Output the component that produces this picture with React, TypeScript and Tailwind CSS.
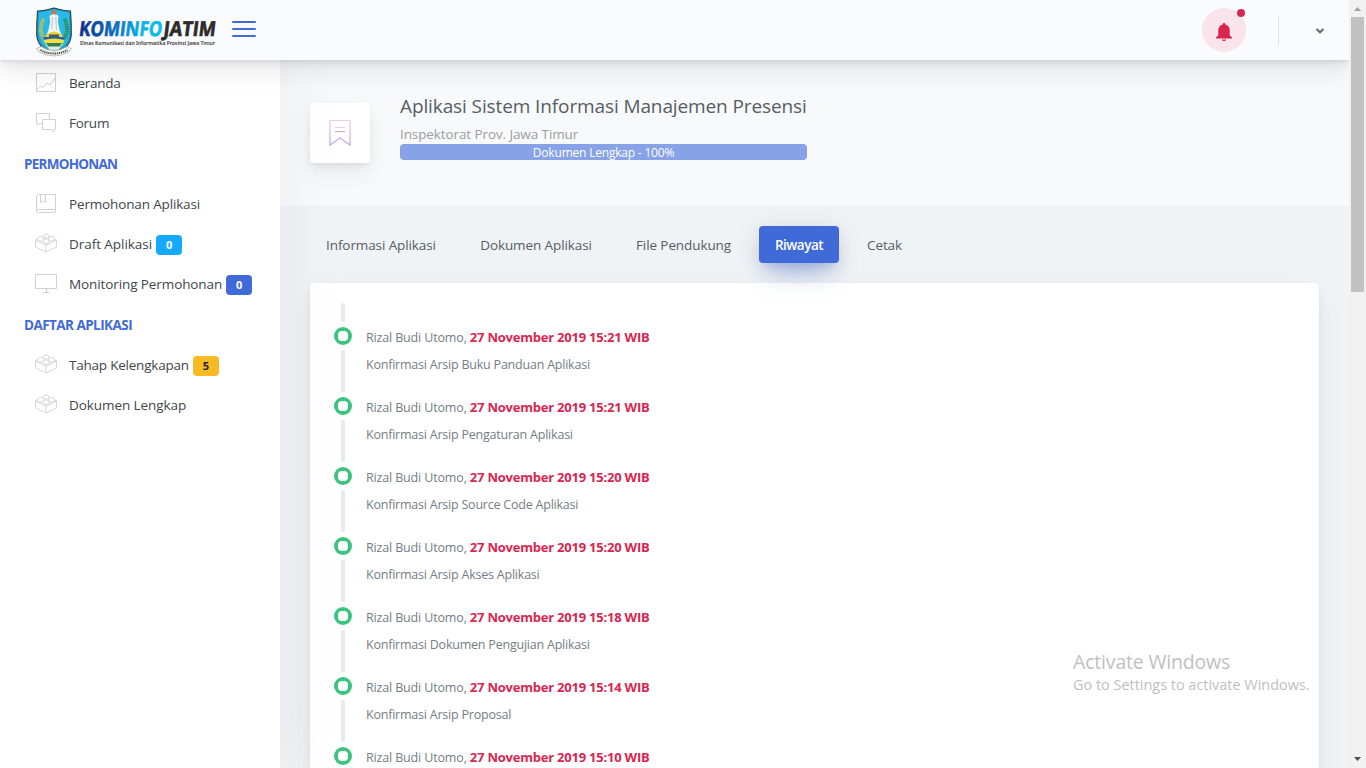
import type { ReactNode } from 'react';

const iconProps = {
  fill: 'none',
  stroke: '#cfd1d3',
  strokeWidth: 1,
  className: 'block h-6 w-6 shrink-0',
  viewBox: '0 0 24 24',
};

function ChartIcon() {
  return (
    <svg {...iconProps}>
      <rect x="2.5" y="2.5" width="19" height="18" />
      <path d="M3 18.500l3.500-3.500 2.500 1.500 4-4.500 3 2L21.500 6.500" />
    </svg>
  );
}

function ChatIcon() {
  return (
    <svg {...iconProps}>
      <path d="M8.500 12.500H6.500L3.500 13.800V12.500H2.500V2.500H15.500V8" />
      <path d="M8.500 8.500h13v10h-1.500v2.500l-3-2.500h-8.500z" />
    </svg>
  );
}

function BookIcon() {
  return (
    <svg {...iconProps}>
      <path d="M21.500 17.500V2.500H4.500a2 2 0 0 0-2 2v14a2 2 0 0 0 2 2h17v-3H4.500a2 2 0 0 0-2 1.500" />
      <path d="M6.500 2.500v8.500l2.500-2.500 2.500 2.500V2.500" />
    </svg>
  );
}

function BrickIcon() {
  return (
    <svg {...iconProps} strokeWidth={0.9}>
      <path d="M1.500 8v7L12 20l10.500-5V8L12 13.200zM12 13.200V20" />
      <path d="M1.500 8l2-1M22.500 8l-2-1" />
      <path d="M3.500 7.500V6c0-.8 1.300-1.500 3-1.500s3 .7 3 1.500v1.500c0 .8-1.300 1.500-3 1.500s-3-.7-3-1.500M14.500 7.500V6c0-.8 1.300-1.500 3-1.500s3 .7 3 1.500v1.500c0 .8-1.300 1.500-3 1.500s-3-.7-3-1.500" />
      <path d="M9 4.500V3.600c0-.8 1.300-1.400 3-1.400s3 .6 3 1.400v.9c0 .8-1.300 1.400-3 1.400s-3-.6-3-1.400M9 10V8.500C9 7.700 10.300 7 12 7s3 .7 3 1.500V10c0 .8-1.300 1.400-3 1.400S9 10.800 9 10" />
    </svg>
  );
}

function MonitorIcon() {
  return (
    <svg {...iconProps}>
      <path d="M1.500 2.500h21v14h-21zM12.500 16.500v4M9 20.500h6.500" />
    </svg>
  );
}

function Crest() {
  return (
    <svg width="38" height="50" viewBox="0 0 38 50" className="block shrink-0">
      <path d="M2.500 4Q9 4 19 1q10 3 16.500 3 1 12 .8 24-.5 9-8.300 15-4 2-9 4.500-5-2.500-9-4.500-7.800-6-8.300-15Q1.500 16 2.500 4z" fill="#1d9dcb" stroke="#25404a" strokeWidth="1.100" />
      <path d="M4 5.500Q11 5 19 2.600q8 2.400 15 2.900l.6 20Q34 35 26.500 41H11.500Q4 35 3.400 25.500z" fill="#2cb8e6" />
      <path d="M8.500 12Q5.500 18 6 25q1.500 6 6 9" fill="none" stroke="#c9c440" strokeWidth="3.600" strokeDasharray="1.600 .7" />
      <path d="M29.500 12q3 6 2.500 13-1.500 6-6 9" fill="none" stroke="#2f9150" strokeWidth="3.800" strokeDasharray="1.800 .6" />
      <path d="M14.500 9l3-2h3l3 2-.6 6 1.600 8 2.500 6h-16l2.500-6 1.600-8z" fill="#f2f2ee" />
      <path d="M17.500 10l-.6 12M20.800 10l.7 13" stroke="#aebcc4" strokeWidth=".8" />
      <path d="M19 2l.9 2.300h2.400l-1.900 1.500.7 2.400L19 6.800l-2.100 1.400.7-2.400-1.900-1.500h2.400z" fill="#e2702c" />
      <path d="M12.500 27q6.500-5 13 0l3 3h-19z" fill="#e9d535" />
      <path d="M14 27.500h10v2.500H14z" fill="#4b5a58" />
      <path d="M8 30h22l-2 4.500H10z" fill="#2660a8" />
      <path d="M8.500 33q10.500-3 21 0l-3 6h-15z" fill="#efe04a" />
      <path d="M11 36h16l-3 4H14z" fill="#387c53" />
      <path d="M12 39.500h14l-3 4h-8z" fill="#e5e8e2" />
      <path d="M1.500 41.500l5-2q6 4 12.500 4t12.500-4l5 2-2.500 3.500q-7 4-15 4t-15-4z" fill="#efefe8" stroke="#8b908e" strokeWidth=".5" />
      <path d="M5.500 43q6 3.500 13.500 3.500t13.500-3.500" fill="none" stroke="#4b504e" strokeWidth="1.900" strokeDasharray="1.300 .8" />
    </svg>
  );
}

function Wordmark() {
  return (
    <svg width="142" height="34" viewBox="0 0 142 34" className="block shrink-0">
      <defs>
        <linearGradient id="brand" x1="0" x2="1" y1="0" y2="0">
          <stop offset="0" stopColor="#0c2f8c" />
          <stop offset=".45" stopColor="#0a72c6" />
          <stop offset=".75" stopColor="#0cb4ea" />
          <stop offset="1" stopColor="#0cbcee" />
        </linearGradient>
      </defs>
      <g transform="translate(2.500 0) skewX(-7)" fontFamily="'Open Sans', sans-serif" fontWeight="700" fontSize="20.500" strokeWidth=".7">
        <text x="0.500" y="20.500" textLength="83" lengthAdjust="spacingAndGlyphs" fill="url(#brand)" stroke="url(#brand)">KOMINFO</text>
        <text x="85" y="20.500" textLength="52" lengthAdjust="spacingAndGlyphs" fill="#2d2a2b" stroke="#2d2a2b">JATIM</text>
      </g>
      <text x="2" y="29.500" textLength="135" lengthAdjust="spacingAndGlyphs" fill="#333333" fontFamily="'Noto Sans', sans-serif" fontWeight="600" fontSize="5.800">Dinas Komunikasi dan Informatika Provinsi Jawa Timur</text>
    </svg>
  );
}

function NavItem({ icon, label, track, badge }: { icon: ReactNode; label: string; track: string; badge?: ReactNode }) {
  return (
    <li className="flex h-10 items-center pl-[34px]">
      {icon}
      <span className={`-mt-px ml-[11px] whitespace-nowrap text-[13.5px] leading-5 text-[#40464c] ${track}`}>{label}</span>
      {badge}
    </li>
  );
}

function Badge({ tone, children }: { tone: string; children: ReactNode }) {
  return (
    <span className={`ml-1 mt-[2px] flex h-5 w-[26px] shrink-0 items-center justify-center rounded text-[11px] font-bold ${tone}`}>
      {children}
    </span>
  );
}

function Heading({ track, children }: { track: string; children: ReactNode }) {
  return (
    <h5 className={`flex h-[41px] items-center whitespace-nowrap pl-6 pt-px text-[13.5px] font-bold text-[#3f6ad8] ${track}`}>{children}</h5>
  );
}

const history = [
  { time: '15:21', text: 'Konfirmasi Arsip Buku Panduan Aplikasi' },
  { time: '15:21', text: 'Konfirmasi Arsip Pengaturan Aplikasi' },
  { time: '15:20', text: 'Konfirmasi Arsip Source Code Aplikasi' },
  { time: '15:20', text: 'Konfirmasi Arsip Akses Aplikasi' },
  { time: '15:18', text: 'Konfirmasi Dokumen Pengujian Aplikasi' },
  { time: '15:14', text: 'Konfirmasi Arsip Proposal' },
  { time: '15:10', text: '' },
];

const tabs = [
  { label: 'Informasi Aplikasi', width: 'w-[142px]' },
  { label: 'Dokumen Aplikasi', width: 'w-[144px]' },
  { label: 'File Pendukung', width: 'w-[127px]' },
  { label: 'Riwayat', width: 'w-20', active: true },
  { label: 'Cetak', width: 'w-[67px]' },
];

const softShadow =
  'shadow-[0_7.5px_35px_rgba(4,9,20,0.03),0_15px_22.5px_rgba(4,9,20,0.03),0_4px_8.5px_rgba(4,9,20,0.05),0_2px_3px_rgba(4,9,20,0.03)]';

function Header() {
  return (
    <header className="relative z-20 flex h-[60px] shrink-0 items-center bg-[#fafbfc] shadow-[0_7.5px_35px_rgba(8,10,48,0.05),0_15px_22.5px_rgba(8,10,48,0.04),0_4px_8.5px_rgba(8,10,48,0.06),0_2px_3px_rgba(8,10,48,0.05)]">
      <div className="flex items-center pl-[35px] pt-1">
        <Crest />
        <div className="ml-[5px]"><Wordmark /></div>
      </div>
      <div className="ml-3 flex w-6 flex-col gap-[5px] pb-[2px]">
        <span className="h-[2px] rounded bg-[#3f6ad8]" />
        <span className="h-[2px] rounded bg-[#3f6ad8]" />
        <span className="h-[2px] rounded bg-[#3f6ad8]" />
      </div>
      <div className="ml-auto flex items-center">
        <div className="relative flex h-11 w-11 items-center justify-center rounded-full bg-[#f8e4ea]">
          <svg width="18" height="20" viewBox="0 0 18 20" className="mt-[3px] block" fill="#d92550">
            <path d="M9 1c.8 0 1.200.5 1.200 1.300v.3C13 3.200 14.700 5.400 14.700 8v5.300L17 15.500v1H1v-1l2.300-2.200V8c0-2.600 1.700-4.800 4.500-5.400v-.3C7.800 1.500 8.200 1 9 1zM7 17.400h4c0 1-.9 1.600-2 1.600s-2-.6-2-1.600z" />
          </svg>
          <span className="absolute right-[1px] top-[1px] h-2 w-2 rounded-full bg-[#d92550]" />
        </div>
        <span className="ml-8 h-[30px] w-px bg-[#dee2e6]" />
        <svg width="10" height="8" viewBox="0 0 10 8" className="ml-9 mr-6 mt-[2px] block" fill="none" stroke="#636b73" strokeWidth="2">
          <path d="M1.500 2L5 5.300 8.500 2" />
        </svg>
      </div>
    </header>
  );
}

function Sidebar() {
  return (
    <nav className="relative z-10 w-[280px] shrink-0 bg-white pt-[3px] shadow-[7px_0_60px_rgba(8,10,48,0.05)]">
      <ul>
        <NavItem icon={<ChartIcon />} label="Beranda" track="tracking-[-0.25px]" />
        <NavItem icon={<ChatIcon />} label="Forum" track="tracking-[-0.25px]" />
      </ul>
      <Heading track="tracking-[-0.75px]">PERMOHONAN</Heading>
      <ul>
        <NavItem icon={<BookIcon />} label="Permohonan Aplikasi" track="tracking-[-0.15px]" />
        <NavItem icon={<BrickIcon />} label="Draft Aplikasi" track="tracking-[-0.05px]" badge={<Badge tone="bg-[#16aaff] text-white">0</Badge>} />
        <NavItem icon={<MonitorIcon />} label="Monitoring Permohonan" track="tracking-[-0.1px]" badge={<Badge tone="bg-[#3f6ad8] text-white">0</Badge>} />
      </ul>
      <Heading track="tracking-[-0.55px]">DAFTAR APLIKASI</Heading>
      <ul>
        <NavItem icon={<BrickIcon />} label="Tahap Kelengkapan" track="tracking-[-0.22px]" badge={<Badge tone="bg-[#f7b924] text-[#212529]">5</Badge>} />
        <NavItem icon={<BrickIcon />} label="Dokumen Lengkap" track="tracking-[-0.07px]" />
      </ul>
    </nav>
  );
}

function TitleBar() {
  return (
    <section className="flex h-[146px] shrink-0 bg-[#f8f9fb] pl-[30px] pt-[34px]">
      <div className={`mt-[9px] flex h-[60px] w-[60px] items-center justify-center rounded bg-white ${softShadow}`}>
        <svg width="24" height="28" viewBox="0 0 24 28" fill="none" className="block">
          <defs>
            <linearGradient id="ribbon" x1="0" x2="0" y1="0" y2="1">
              <stop offset="0" stopColor="#f3c9ec" />
              <stop offset="1" stopColor="#b9a6dd" />
            </linearGradient>
          </defs>
          <path d="M2 1.500h20v24.500L12 19 2 26z" stroke="url(#ribbon)" strokeWidth="1.200" />
          <path d="M7 8.500h10" stroke="#eecbea" />
          <path d="M7 12.500h10" stroke="#c6a5d9" />
        </svg>
      </div>
      <div className="ml-[30px] w-[407px]">
        <h1 className="h-6 whitespace-nowrap text-[19px] leading-6 tracking-[-0.11px] text-[#565d64]">Aplikasi Sistem Informasi Manajemen Presensi</h1>
        <p className="mt-[6px] h-5 whitespace-nowrap text-[13.5px] leading-5 tracking-[-0.1px] text-[#9a9da0]">Inspektorat Prov. Jawa Timur</p>
        <div className="h-4 whitespace-nowrap rounded bg-[#87a2e6] text-center text-[12px] font-medium leading-[17px] tracking-[-0.2px] text-white">Dokumen Lengkap - 100%</div>
      </div>
    </section>
  );
}

function Scrollbar() {
  return (
    <aside className="flex w-[17px] shrink-0 flex-col items-center bg-[#f1f1f1]">
      <svg width="17" height="17" viewBox="0 0 17 17" className="block shrink-0"><path d="M5 11h7L8.500 7z" fill="#a3a3a3" /></svg>
      <div className="h-[275px] w-[13px] bg-[#c1c1c1]" />
      <svg width="17" height="17" viewBox="0 0 17 17" className="mt-auto block shrink-0"><path d="M5 6h7l-3.500 4z" fill="#505050" /></svg>
    </aside>
  );
}

export default function App() {
  return (
    <div className="relative flex h-[768px] w-[1366px] overflow-hidden font-['Open_Sans',sans-serif]">
      <div className="flex w-[1349px] flex-col overflow-hidden">
        <Header />
        <div className="flex min-h-0 flex-1">
          <Sidebar />
          <main className="flex min-w-0 flex-1 flex-col bg-[#f0f3f6]">
            <TitleBar />
            <div className="flex gap-3 pl-[30px] pt-5">
              {tabs.map((tab) => (
                <a
                  key={tab.label}
                  className={`${tab.width} flex h-[37px] items-center justify-center whitespace-nowrap rounded pt-[2px] text-[13.5px] ${
                    tab.active
                      ? 'relative z-[1] bg-[#3f6ad8] font-semibold tracking-[-0.5px] text-white shadow-[0_16px_26px_-10px_rgba(63,106,216,0.5),0_4px_25px_rgba(0,0,0,0.12),0_8px_10px_-5px_rgba(63,106,216,0.2)]'
                      : 'tracking-[-0.1px] text-[#565d64]'
                  }`}
                >
                  {tab.label}
                </a>
              ))}
            </div>
            <section className={`ml-[30px] mr-[30px] mt-5 h-[600px] shrink-0 rounded bg-white pl-[19px] pt-5 ${softShadow}`}>
              <div className="ml-3 h-[19px] w-1 rounded-t bg-[#e9ecef]" />
              <ul>
                {history.map((item, i) => (
                  <li key={i} className="flex h-[70px]">
                    <div className="flex w-7 flex-col items-center">
                      <span className="my-[5px] flex h-[18px] w-[18px] shrink-0 items-center justify-center rounded-full bg-[#3ac47d]">
                        <span className="h-[10px] w-[10px] rounded-[4px] bg-white" />
                      </span>
                      <span className="w-1 flex-1 bg-[#e9ecef]" />
                    </div>
                    <div className="ml-[9px] whitespace-nowrap pt-[5px] text-[12.5px] text-[#747d85]">
                      <h4 className="h-5 leading-5">
                        <span className="tracking-[-0.15px]">Rizal Budi Utomo, </span>
                        <b className="text-[13px] font-bold tracking-[-0.22px] text-[#d92550]">27 November 2019 {item.time} WIB</b>
                      </h4>
                      <p className="mt-2 h-5 leading-5 tracking-[-0.22px]">{item.text}</p>
                    </div>
                  </li>
                ))}
              </ul>
            </section>
          </main>
        </div>
      </div>
      <Scrollbar />
      <div className="pointer-events-none absolute left-[1073px] top-[649px] z-30 whitespace-nowrap text-[#bfbfbf]">
        <div className="h-[26px] text-[19.5px] leading-[26px] tracking-[-0.18px]">Activate Windows</div>
        <div className="h-5 text-[14.5px] leading-5 tracking-[-0.03px]">Go to Settings to activate Windows.</div>
      </div>
    </div>
  );
}
